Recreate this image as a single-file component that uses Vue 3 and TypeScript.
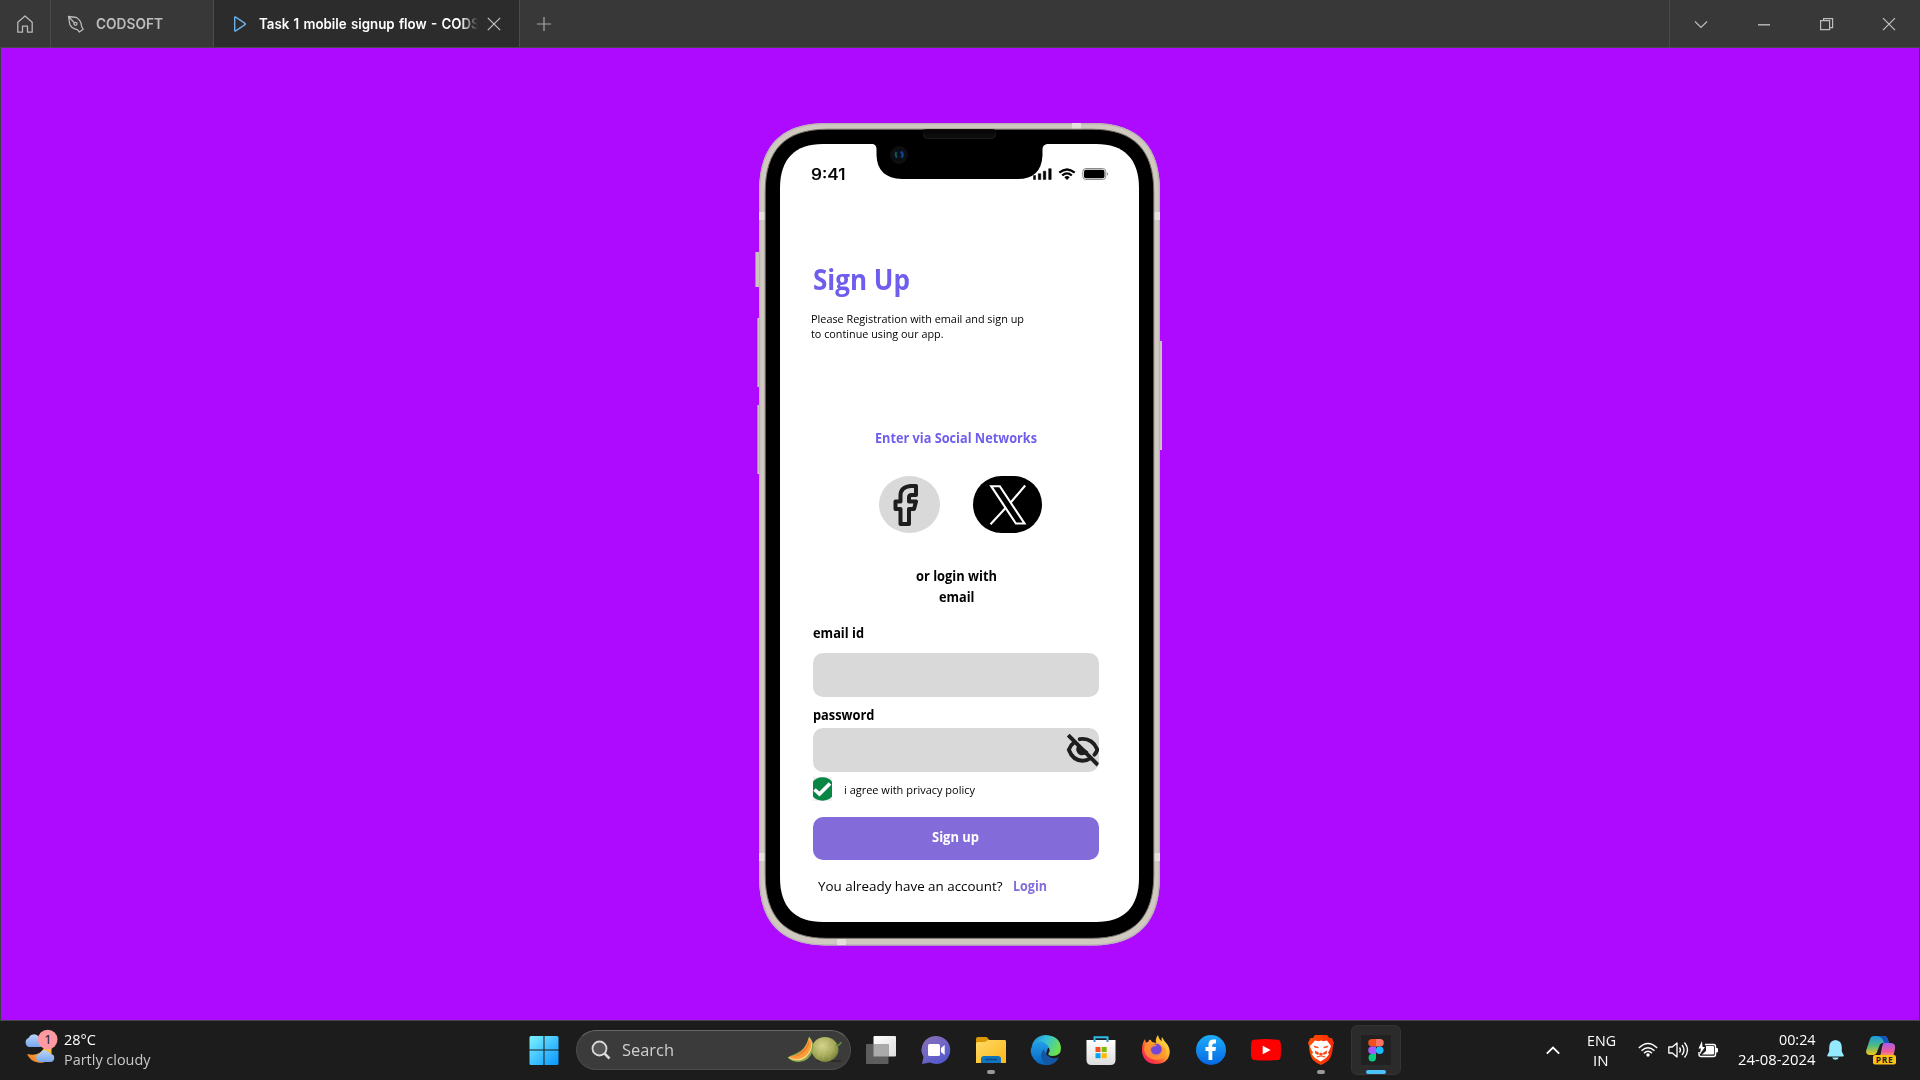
<script setup lang="ts">
import type { Directive } from 'vue'

// Condenses a run of text horizontally so that it occupies the given width.
const vFit: Directive<HTMLElement, number> = {
  mounted(el, { value }) {
    const natural = el.getBoundingClientRect().width
    if (!natural) return
    el.style.transform = `scaleX(${value / natural})`
    el.style.marginRight = `${value - natural}px`
  },
}
</script>

<template>
  <div class="desktop">
    <header class="titlebar">
      <div class="home">
        <svg width="18" height="20" viewBox="0 0 18 20" fill="none" stroke="#b9b9b9" stroke-width="1.3" stroke-linejoin="round"><path d="M1.8 8.2 9 2l7.2 6.200v10h-4.700v-6h-5v6H1.800z" /></svg>
      </div>
      <div class="tab tab-file">
        <svg width="18" height="20" viewBox="0 0 18 20" fill="none" stroke="#b9b9b9" stroke-width="1.3" stroke-linejoin="round"><path d="M1.500 2.500 9.500 3.500Q14.500 7 14.500 12.200L16.200 15.200 12.400 18 10.400 15.600Q4.500 14.500 2.800 10.200zM1.800 2.800 7.500 9" /><circle cx="8.500" cy="9.800" r="1.500" /></svg>
        <span v-fit="67" class="fit">CODSOFT</span>
      </div>
      <div class="tab tab-active">
        <svg width="14" height="18" viewBox="0 0 14 18" fill="none" stroke="#68b0ea" stroke-width="1.400" stroke-linejoin="round"><path d="M1.700 2.500v13q0 1 1 .400l9.300-6.200q.800-.700 0-1.400L2.700 2.100q-1-.600-1 .400z" /></svg>
        <div class="tab-title"><span v-fit="212" class="fit">Task 1 mobile signup flow - COD</span>S</div>
        <svg class="tab-x" width="14" height="14" viewBox="0 0 14 14" stroke="#c4c4c4" stroke-width="1.200"><path d="M.800.800l12.400 12.400M13.200.800.800 13.200" /></svg>
      </div>
      <svg class="plus" width="14" height="14" viewBox="0 0 14 14" stroke="#a5a5a5" stroke-width="1.200"><path d="M7 0v14M0 7h14" /></svg>
      <div class="controls">
        <svg width="62" height="48" viewBox="0 0 62 48" fill="none" stroke="#bdbdbd" stroke-width="1.200"><path d="M25 21.500l6 6 6-6" /></svg>
        <svg width="63" height="48" viewBox="0 0 63 48" fill="none" stroke="#bdbdbd" stroke-width="1.400"><path d="M26 24.800h12" /></svg>
        <svg width="62" height="48" viewBox="0 0 62 48" fill="none" stroke="#bdbdbd" stroke-width="1.200"><path d="M25.600 20.600h9v9h-9zM28.600 20.600v-2h9v9h-3" /></svg>
        <svg width="63" height="48" viewBox="0 0 63 48" fill="none" stroke="#c4c4c4" stroke-width="1.200"><path d="M26 18.200l12 12M38 18.200l-12 12" /></svg>
      </div>
    </header>

    <main class="stage">
      <div class="phone">
        <svg class="device" width="404" height="823" viewBox="0 0 404 823">
          <path d="M0 129h5v35H0zM2 195h4v69H2zM2 282h4v69H2z" fill="#cbc4bd" /><path d="M0 129h1v35H0zM2 195h1v69H2zM2 282h1v69H2z" fill="#9f91a5" />
          <path d="M403 218h4v109h-4z" fill="#cbc4bd" />
          <path d="M4 68C4 24 25 0 71 0H338C384 0 405 24 405 68V754C405 798 384 822.500 338 822.500H71C25 822.500 4 798 4 754z" fill="#d0c9c0" />
          <path d="M4.700 68C4.700 24 25 .700 71 .700H338C384 .700 404.300 24 404.300 68V754C404.300 798 384 821.800 338 821.800H71C25 821.800 4.700 798 4.700 754z" fill="none" stroke="#b9b0b4" stroke-width="1.200" />
          <path d="M4 89h7v8H4zM398 89h7v8h-7zM4 730h7v8H4zM398 730h7v8h-7zM317 0h9v6h-9zM82 816h9v6h-9z" fill="#e4dfda" />
          <path d="M10.200 69C10.200 27 30 6.200 72 6.200H337C379 6.200 398.800 27 398.800 69V752C398.800 794 379 815.300 337 815.300H72C30 815.300 10.200 794 10.200 752z" fill="#000" stroke="#77716b" stroke-width="1" />
          <path d="M25 65C25 36 40 21 68 21H341C369 21 384 36 384 65V755C384 784 369 799 341 799H68C40 799 25 784 25 755z" fill="#fff" />
          <rect x="168.500" y="6.500" width="72" height="9" rx="4" fill="#0c0c0c" stroke="#1d1d1d" />
          <path d="M168 6.500h72v4h-72z" fill="#080808" />
        </svg>
        <div class="screen">
          <div class="status">
            <span v-fit="34.500" class="fit clock">9:41</span>
            <svg class="signals" width="78" height="16" viewBox="0 0 78 16">
              <path d="M1.500 9.500h2v4h-2zM6.300 7.700h2.500v5.800H6.300zM11.300 5.200h2.500v8.300h-2.500zM16.700 2.700h2.500v10.800h-2.500z" stroke="#000" stroke-width=".500" stroke-linejoin="round" />
              <path d="M27.300 6.700Q35 .300 42.700 6.700M30.200 9.500Q35 5.200 39.800 9.500" fill="none" stroke="#000" stroke-width="2.300" /><path d="M32.300 11.200Q35 9 37.700 11.200L35 14z" />
              <rect x="50.800" y="2.500" width="23" height="11" rx="3.200" fill="none" stroke="#888" /><rect x="52" y="3.800" width="20.500" height="8.500" rx="2" /><path d="M75 6.300q2.200 1.600 0 3.400z" fill="#888" />
            </svg>
          </div>
          <h1><span v-fit="97" class="fit">Sign Up</span></h1>
          <p class="intro"><span v-fit="213" class="fit">Please Registration with email and sign up</span><br><span v-fit="132.500" class="fit">to continue using our app.</span></p>
          <p class="social-title"><span v-fit="162" class="fit">Enter via Social Networks</span></p>
          <div class="social">
            <button class="facebook" aria-label="Facebook">
              <svg width="27" height="44" viewBox="0 0 27 44" fill="none" stroke="#1e1e1e" stroke-width="4" stroke-linejoin="round"><path d="M24 3h-5.500Q8.500 4 8.500 12.500v6H3.500V26h5v15h8.500V26h5l2-7.500h-7v-4q0-2.500 2.500-2.500H24z" /></svg>
            </button>
            <button class="xlogo" aria-label="X">
              <svg width="38" height="40" viewBox="0 0 38 40" fill="none" stroke="#fff" stroke-width="2.100"><path d="M2.200 1.200h8.600L35.500 38.500h-8.600z" /><path d="M1.500 39.200 17 22.500M21.500 17.700 36.200.500" /></svg>
            </button>
          </div>
          <p class="or"><span v-fit="81" class="fit">or login with</span><br><span v-fit="35.500" class="fit">email</span></p>
          <label class="label email-label"><span v-fit="51" class="fit">email id</span></label>
          <div class="field"></div>
          <label class="label pass-label"><span v-fit="61.500" class="fit">password</span></label>
          <div class="field pass">
            <svg width="32" height="32" viewBox="0 0 32 32" fill="none" stroke="#1e1e1e" stroke-width="4"><path d="M1.200 1.200 31 31" /><path d="M12.700 5.200C22 3.500 28 9.500 30.300 15.500 29.800 17.500 28.800 19.300 27.500 20.600M7.200 8.200Q3.500 11 1.800 15.800C4.500 23 9.500 26.700 15.500 26.700Q20 26.700 23 24.500" stroke-linecap="round" stroke-width="3.900" /><path d="M11.800 12C8.500 15 11 20.300 15.500 20.300Q18.500 20.200 20 18z" fill="#1e1e1e" stroke-width="2" /></svg>
          </div>
          <div class="agree">
            <svg width="19" height="24" viewBox="0 0 19 24"><path d="M0 0h19v24H0z" fill="#f1eff0" /><path d="M0 4.500Q3 .500 9.500.300 16 .500 19 4.500v15Q16 23.500 9.500 23.700 3 23.500 0 19.500z" fill="#078644" /><path d="M1.500 12.500 6.500 17 17 6.500" fill="none" stroke="#fff" stroke-width="3.600" /></svg>
            <span v-fit="131" class="fit">i agree with privacy policy</span>
          </div>
          <button class="submit"><span v-fit="47" class="fit">Sign up</span></button>
          <p class="footer"><span v-fit="184.500" class="fit">You already have an account?</span><a><span v-fit="34" class="fit">Login</span></a></p>
        </div>
        <div class="notch">
          <svg width="182" height="50" viewBox="0 0 182 50"><path d="M4 15h174q-4.500 1-4.500 5v6q-1 24-25 24H33Q8 49 7.500 26v-6Q7.500 16 4 15z" /><circle cx="30" cy="26" r="9" fill="#0d0e10" /><circle cx="30" cy="25.500" r="5" fill="#07101d" /><path d="M27.500 23q-2 3 .500 5.500" stroke="#1d504f" stroke-width="2" fill="none" /><path d="M32 22.500q3 3 .500 6" stroke="#144090" stroke-width="2.500" fill="none" /></svg>
        </div>
      </div>
    </main>

    <footer class="taskbar">
      <div class="weather">
        <svg width="36" height="40" viewBox="0 0 36 40">
          <defs><linearGradient id="cl" x1="0" y1="0" x2="0" y2="1"><stop stop-color="#b9d4fb" /><stop offset="1" stop-color="#77a7ee" /></linearGradient><linearGradient id="mo" x1="1" y1="0" x2="0" y2="1"><stop stop-color="#ffd044" /><stop offset="1" stop-color="#ee7521" /></linearGradient></defs>
          <path d="M5 19a4.800 4.800 0 0 1-.500-9A6 6 0 0 1 15 9q5 1 5 5t-4 5z" fill="url(#cl)" />
          <path d="M27.500 18v12Q21 36 14 34.500 6 33 3 26q12 3 17-6z" fill="url(#mo)" />
          <path d="M16 34a4.300 4.300 0 0 1 0-8.500Q18 21.500 22 22.500q3 .500 4 3.500 4.500 0 4.200 4.200-.200 3.800-4.200 3.800z" fill="url(#cl)" />
          <circle cx="23.700" cy="11.500" r="9.800" fill="#ff9aa3" /><text x="24" y="16.200" text-anchor="middle" font-family="Noto Sans, sans-serif" font-size="13" fill="#222">1</text>
        </svg>
        <div class="weather-text"><div><span v-fit="32" class="fit">28°C</span></div><div class="dim"><span v-fit="86.500" class="fit">Partly cloudy</span></div></div>
      </div>

      <div class="cell start">
        <svg width="30" height="30" viewBox="0 0 30 30"><defs><linearGradient id="win" x1="0" y1="0" x2="1" y2="1"><stop stop-color="#7cf3ff" /><stop offset="1" stop-color="#0794ff" /></linearGradient></defs><path d="M2 1h12.500v13.500H.500v-12Q.500 1 2 1zM15.500 1H28q1.500 0 1.500 1.500v12h-14zM.500 15.500h14V30H2Q.500 30 .500 28.500zM15.500 15.500h14v13q0 1.500-1.500 1.500H15.500z" fill="url(#win)" /></svg>
      </div>
      <div class="search">
        <svg width="20" height="20" viewBox="0 0 20 20" fill="none" stroke="#d9d9d9" stroke-width="1.800"><circle cx="8.500" cy="8.500" r="7" fill="#555" /><path d="M13.500 13.500 18.500 18.500" stroke-width="2.500" /></svg>
        <span v-fit="52" class="fit">Search</span>
        <svg class="melon" width="56" height="28" viewBox="0 0 56 28">
          <defs><radialGradient id="ml" cx=".4" cy=".35" r=".7"><stop stop-color="#d5d58e" /><stop offset=".6" stop-color="#a7aa59" /><stop offset="1" stop-color="#717a36" /></radialGradient></defs>
          <path d="M30 25h24" stroke="#302c27" stroke-width="2" />
          <ellipse cx="38" cy="13.500" rx="13.500" ry="12.500" fill="url(#ml)" /><path d="M28 9l6 5-3 8M33 3l5 8-2 13M42 2l-3 9 5 5-2 9M48 6l-4 6 5 5" stroke="#d9d59d" stroke-width=".500" fill="none" stroke-dasharray="1.500 1.500" opacity=".7" /><path d="M49 9q4 1 5-3" stroke="#63893d" stroke-width="1.800" fill="none" />
          <path d="M22 .500Q28 7 26 14 23 25 12 26 5 26 .500 21.500 4 19 8 18 19 14 22 .500z" fill="#83a84c" /><path d="M22.200 1.200Q26.500 7 24.500 13.500 20 24 11 24.500 5 24.500 1.200 21.300 19 19 22.200 1.200z" fill="#fbd27c" /><path d="M22.200 1.500Q25.500 8 23 13.500 19 22 11 23 5 23.500 2 21 18 18 22.200 1.500z" fill="#fb9b3d" /><path d="M22 4Q23 10 18 15 13 20 6 21 19 16 22 4z" fill="#f17d27" />
        </svg>
      </div>
      <div class="cell view">
        <svg width="30" height="30" viewBox="0 0 30 30"><defs><linearGradient id="tv" x2="1" y2="1"><stop stop-color="#fff" /><stop offset="1" stop-color="#ddd" /></linearGradient></defs><rect x="7.500" y="1" width="22.500" height="20.500" rx="1" fill="url(#tv)" /><rect x="0" y="9" width="22.500" height="20" rx="1" fill="#5d5d5d" /><path d="M7.500 9h15v12.500h-15z" fill="#aaa" /></svg>
      </div>
      <div class="cell">
        <svg width="30" height="30" viewBox="0 0 30 30"><defs><linearGradient id="ch" x2=".7" y2="1"><stop stop-color="#8a70b3" /><stop offset=".55" stop-color="#6e66c6" /><stop offset="1" stop-color="#5058cb" /></linearGradient></defs><path d="M15.500 1A14 14 0 1 1 9 27.500L1 29 2.500 22A14 14 0 0 1 15.500 1z" fill="url(#ch)" /><rect x="7" y="9" width="12" height="12" rx="1.500" fill="#fff" /><path d="M20 13l3.700-3v10L20 17z" fill="#fff" /></svg>
      </div>
      <div class="cell">
        <svg width="30" height="30" viewBox="0 0 30 30"><defs><linearGradient id="fo" x2="1" y2="1"><stop stop-color="#ffd968" /><stop offset="1" stop-color="#fbb917" /></linearGradient></defs><path d="M0 10V4q0-2 2-2h8.500l3 3-3 5z" fill="#db9805" /><path d="M0 8.500Q0 7 2 7h7l3-2h17q1 0 1 1.500V28H0z" fill="url(#fo)" /><path d="M5 28v-4q0-3 3-3h14q3 0 3 3v4z" fill="#1273bd" /><path d="M9 24.500h12" stroke="#084d88" stroke-width="1.500" /></svg>
        <i class="running"></i>
      </div>
      <div class="cell">
        <svg width="30" height="30" viewBox="0 0 30 30"><defs><linearGradient id="ed1" x1="0" x2="1" y2=".4"><stop stop-color="#168bd3" /><stop offset=".5" stop-color="#35c1db" /><stop offset="1" stop-color="#6be052" /></linearGradient><linearGradient id="ed2" x2="0" y2="1"><stop stop-color="#239fe8" /><stop offset="1" stop-color="#0864be" /></linearGradient></defs><path d="M.500 12Q3 .500 15 0 29 1 30 13q0 8-8.500 8-5 0-4-3 2-2 .500-5L10 9Q3 8 .500 12z" fill="url(#ed1)" /><path d="M18 12Q12 4 4 8-2 13 .500 20q4 10 15 10 4 0 6-1-9-4-6-12 1-4 2.500-5z" fill="url(#ed2)" /><path d="M13 14q-7 8 2 15.500Q25 30 28 22q-6 3-11-1-3-2-4-7z" fill="#1557a5" /></svg>
      </div>
      <div class="cell">
        <svg width="30" height="30" viewBox="0 0 30 30"><defs><linearGradient id="st" x2="0" y2="1"><stop stop-color="#fff" /><stop offset="1" stop-color="#ddd" /></linearGradient></defs><path d="M8.500 6V2.200H21.500V6" fill="none" stroke="#2dbce9" stroke-width="2" /><path d="M.500 5h29v20q0 5-5 5h-19q-5 0-5-5z" fill="url(#st)" /><path d="M8.500 5h1v2h-2V5zM21.500 5h1v2h-2V5z" fill="#2798cf" /><path d="M9.500 12h5v5h-5z" fill="#f25022" /><path d="M15.700 12h5v5h-5z" fill="#7fba00" /><path d="M9.500 18.200h5v5h-5z" fill="#00a4ef" /><path d="M15.700 18.200h5v5h-5z" fill="#ffb900" /></svg>
      </div>
      <div class="cell">
        <svg width="30" height="30" viewBox="0 0 30 30"><defs><linearGradient id="ff" x1="1" y1="0" x2="0" y2="1"><stop stop-color="#fff44f" /><stop offset=".4" stop-color="#ffb02d" /><stop offset=".7" stop-color="#ff403b" /><stop offset="1" stop-color="#e7157f" /></linearGradient></defs><path d="M17 0q1 5 4 6-1-2 0-4 2 4 5 7 3 4 2.700 9Q27 29 15 29T1 17Q.500 9 4 4l1 4 2-1q2-5 4 0l4 1Q14 4 17 0z" fill="url(#ff)" /><circle cx="15" cy="15" r="6.500" fill="#7547d7" /><path d="M4 8q7-3 10 1l2 2q-5 0-6 3 0 7 8 5 5-4 1-9 7 3 6 8-2 7-10 7Q4 23 3 15z" fill="#ff9a2e" opacity=".8" /></svg>
      </div>
      <div class="cell">
        <svg width="30" height="30" viewBox="0 0 30 30"><defs><linearGradient id="fb" x2="0" y2="1"><stop stop-color="#1cadfa" /><stop offset="1" stop-color="#0568e4" /></linearGradient></defs><circle cx="15" cy="15" r="15" fill="url(#fb)" /><path d="M12.500 25v-9H9.500v-4h3V9.500q0-5 5-5h2.500v4h-2q-1.700 0-1.700 1.700V12H20l-.600 4h-3.100v9z" fill="#fff" /></svg>
      </div>
      <div class="cell">
        <svg width="30" height="30" viewBox="0 0 30 30"><path d="M3 4.700Q15 3.500 27 4.700q2.500.300 2.700 3 .600 7 0 14-.200 3-2.700 3.300-12 1-24 0Q.600 24.700.300 22q-.600-7 0-14Q.500 5 3 4.700z" fill="#f00" /><path d="M11.700 10.700v8.500l8-4.200z" fill="#fff" /></svg>
      </div>
      <div class="cell">
        <svg width="30" height="30" viewBox="0 0 30 30"><defs><linearGradient id="br" x2="1"><stop stop-color="#ff5200" /><stop offset="1" stop-color="#fa2708" /></linearGradient></defs><path d="M9 0h12L23.500 3h2.500L28 8l-1 3q-.500 9-4 14-3.500 3-8 5Q10 28 7 25 3.500 20 3 11L2 8 4.500 3H7z" fill="url(#br)" /><path d="M9 5.500l3.500.700 2.500-.700 2.500.700 3.500-.700 4 5.500-1 3-2 3.500 1 2-3 3.500-5.500 3.500-5.500-3.500-3-3.500 1-2-2-3.500-1-3z" fill="#fff" /><path d="M7.500 10.500 12.800 12l-.800 1.300-3.500-.800zM22.500 10.500 17.200 12l.800 1.300 3.500-.800zM9 15.500l4 2.200-.800 2.200-3-1.500zM21 15.500l-4 2.200.800 2.200 3-1.500zM15 17.500l2.500 1.500L15 20.500 12.500 19zM10.500 21.500 15 20.200l4.500 1.300-.500 1-4-1-4 1z" fill="#fb4a16" /></svg>
        <i class="running"></i>
      </div>
      <div class="cell">
        <div class="tile"><svg width="30" height="30" viewBox="0 0 30 30"><path d="M0 0h30v30H0z" fill="#212121" /><path d="M15 4h-4a3.600 3.600 0 0 0 0 7.500h4z" fill="#f24e1e" /><path d="M15 4h4a3.600 3.600 0 0 1 0 7.500h-4z" fill="#ff7262" /><path d="M15 11.500h-4a3.600 3.600 0 0 0 0 7.500h4z" fill="#a259ff" /><circle cx="18.700" cy="15.200" r="3.800" fill="#1abcfe" /><path d="M15 19h-4a3.700 3.700 0 1 0 4 3.700z" fill="#0acf83" /></svg></div>
        <i class="running active"></i>
      </div>

      <div class="tray">
        <svg class="up" width="14" height="9" viewBox="0 0 14 9" fill="none" stroke="#fff" stroke-width="1.800"><path d="M.800 7.700 7 1.500l6.200 6.200" /></svg>
        <div class="lang"><div><span v-fit="29" class="fit">ENG</span></div><div><span v-fit="15.500" class="fit">IN</span></div></div>
        <svg class="wifi" width="20" height="16" viewBox="0 0 20 16" fill="none" stroke="#fff" stroke-width="1.400"><path d="M.800 6Q10-3 19.200 6M3.500 8.800q6.500-6.200 13 0M6 11.300q4-4 8 0" /><circle cx="10" cy="13" r="1.700" fill="#fff" stroke="none" /></svg>
        <svg class="sound" width="20" height="18" viewBox="0 0 20 18" fill="none" stroke="#fff" stroke-width="1.300"><path d="M.800 6h3.500L9 2v14l-4.700-4H.800z" stroke-linejoin="round" /><path d="M11.500 6.500q2 2.500 0 5M14 4q4 5 0 10M16.500 1.500q6 7.500 0 15" /></svg>
        <svg class="battery" width="20" height="18" viewBox="0 0 20 18"><path d="M7 3.500h8.500q2 0 2 2v8q0 2-2 2H3q-2 0-2-2V11" fill="none" stroke="#fff" stroke-width="1.400" /><path d="M8 5h7q1 0 1 1v6.500q0 1-1 1H4L8 10zM18 7h1q1 0 1 1v2.500q0 1-1 1h-1z" fill="#fff" /><path d="M4 0 .500 7.500H3L1.500 14 7 6H4.500z" fill="#fff" /></svg>
        <div class="date"><div><span v-fit="36.500" class="fit">00:24</span></div><div><span v-fit="77.500" class="fit">24-08-2024</span></div></div>
        <svg class="bell" width="17" height="20" viewBox="0 0 17 20" fill="#93eaff"><path d="M8.500 0Q14.500.500 14.800 7v4.500l2 4q.200 1-1 1H1.200q-1.200 0-1-1l2-4V7Q2.500.500 8.500 0zM5.200 17.500h6.600q-.800 2.200-3.300 2.200t-3.300-2.200z" /></svg>
        <svg class="copilot" width="30" height="30" viewBox="0 0 30 30"><defs><linearGradient id="c1" x2="0" y2="1"><stop stop-color="#1c9be0" /><stop offset=".5" stop-color="#4dba82" /><stop offset="1" stop-color="#f4c817" /></linearGradient><linearGradient id="c2" x2="0" y2="1"><stop stop-color="#a65de8" /><stop offset=".6" stop-color="#ee5c98" /><stop offset="1" stop-color="#ffa35a" /></linearGradient></defs><path d="M8 1h10q3 0 4 4l1 3h-6q-3 0-4 4l-2 5q-1 3-4 3H4q-4 0-4-4L4 4q1-3 4-3z" fill="url(#c1)" /><path d="M11 1h7q3 0 4 4l1 3h-5q-1-6-7-7z" fill="#1654bf" /><path d="M18 8h7q5 0 4 6l-2 8H12q3-1 3-5l1-5q1-4 2-4z" fill="url(#c2)" /><rect x="7" y="20" width="23" height="9.500" rx="2" fill="#fdc313" /><text x="18.500" y="27.600" text-anchor="middle" font-family="Open Sans, sans-serif" font-size="8.500" font-weight="700" letter-spacing=".6" fill="#222">PRE</text></svg>
      </div>
    </footer>
  </div>
</template>

<style>
body { margin: 0; overflow: hidden; }
</style>

<style scoped>
.desktop { width: 1920px; height: 1080px; display: flex; flex-direction: column; background: #1c1c1c; font-family: "Open Sans", "Noto Sans", sans-serif; }
.desktop svg { display: block; flex: none; overflow: visible; }
.fit { display: inline-block; white-space: nowrap; transform-origin: 0 50%; }
p, h1 { margin: 0; }
button { border: 0; padding: 0; font: inherit; }

.titlebar { height: 48px; box-sizing: border-box; border-bottom: 1px solid #4a4a4a; background: #383838; display: flex; align-items: center; font-family: Inter, sans-serif; font-size: 14px; line-height: 20px; }
.home { width: 50px; height: 47px; border-right: 1px solid #4b4b4b; display: flex; align-items: center; justify-content: center; }
.tab { height: 47px; box-sizing: border-box; border-right: 1px solid #4b4b4b; display: flex; align-items: center; }
.tab-file { width: 163px; padding-left: 16px; gap: 11px; color: #bdbdbd; font-weight: 600; }
.tab-active { width: 306px; padding-left: 19px; background: #2c2c2c; color: #fff; font-weight: 600; }
.tab-title { width: 219px; margin-left: 12px; white-space: nowrap; word-spacing: 1px; mask-image: linear-gradient(90deg, #000 202px, transparent 219px); }
.tab-x { margin-left: 9px; }
.plus { margin-left: 17px; }
.controls { margin-left: auto; height: 47px; border-left: 1px solid #4b4b4b; display: flex; width: 250px; }

.stage { height: 972px; box-sizing: border-box; padding-top: 75px; background: #ad0aff; border: solid #3d3d45; border-width: 0 1px; display: flex; justify-content: center; }
.phone { position: relative; width: 404px; height: 823px; margin-right: 6px; }
.device { position: absolute; left: 0; top: 0; }
.notch { position: absolute; left: 113.500px; top: 6px; }
.screen { position: relative; margin: 21px 0 0 25px; width: 359px; height: 778px; box-sizing: border-box; padding: 20px 40px 0 33px; display: flex; flex-direction: column; color: #000; }
.status { display: flex; height: 20px; margin-left: -2.500px; align-items: center; }
.clock { font: 500 15.400px/20px Inter, sans-serif; padding-top: 1px; -webkit-text-stroke: .2px #000; }
.signals { margin: 0 0 0 186.500px; }
h1 { margin-top: 78px; font-size: 28px; line-height: 34px; font-weight: 700; color: #6f5eed; }
.intro { margin: 16px 0 0 -2.500px; font-size: 11.300px; line-height: 14.500px; }
.social-title { margin: 87px 0 0 61.500px; font-size: 13.500px; line-height: 20px; font-weight: 700; color: #6f5eed; }
.social { display: flex; margin: 28px 0 0 66px; gap: 33px; height: 57px; }
.facebook, .xlogo { display: flex; align-items: flex-start; box-sizing: border-box; height: 57px; }
.facebook { width: 61px; border-radius: 50%; background: #d9d9d9; padding: 7px 0 0 12.500px; }
.xlogo { width: 68.500px; border-radius: 29px; background: #000; padding: 9px 0 0 15.500px; }
.or { width: 81px; margin: 33px 0 0 103px; text-align: center; font-size: 13.500px; line-height: 21px; font-weight: 700; white-space: nowrap; }
.label { font-size: 13.500px; line-height: 20px; font-weight: 700; }
.email-label { margin-top: 15px; }
.field { height: 44px; margin-top: 10px; background: #d9d9d9; border-radius: 10px; flex: none; }
.pass-label { margin-top: 8px; }
.pass { margin-top: 3px; display: flex; justify-content: flex-end; align-items: center; overflow: hidden; }
.agree { display: flex; margin-top: 5px; height: 24px; font-size: 11.300px; line-height: 25px; gap: 12px; }
.submit { height: 43px; margin-top: 16px; border-radius: 10px; background: #836cd9; color: #fff; font-size: 13.500px; line-height: 41px; font-weight: 700; text-align: left; padding: 0 0 2px 119px; }
.footer { margin: 16px 0 0 5px; font-size: 13.500px; line-height: 20px; white-space: nowrap; display: flex; gap: 10.500px; }
.footer a { color: #836cd9; font-weight: 700; }

.taskbar { height: 60px; box-sizing: border-box; border-top: 1px solid #474747; background: #1c1c1c; display: flex; align-items: center; color: #fff; font-size: 15px; line-height: 20px; padding-bottom: 1px; }
.weather { width: 491.500px; box-sizing: border-box; margin-right: 25px; padding-left: 24px; display: flex; align-items: center; flex: none; margin-top: -4px; }
.weather-text { margin: 1px 0 0 4px; }
.dim { color: #c9c9c9; }
.cell { width: 55px; height: 59px; flex: none; display: flex; align-items: center; justify-content: center; position: relative; }
.search { width: 275px; height: 40px; box-sizing: border-box; border: 1px solid #4c4c4c; border-top-color: #686868; border-radius: 20px; background: #3b3b3b; margin-left: 4.500px; padding-left: 14px; display: flex; align-items: center; font-size: 17px; color: #cfcfcf; flex: none; }
.search .fit { margin-left: 11px; }
.search .melon { margin-left: auto; margin-right: 7px; }
.view { margin-left: 2.500px; }
.running { position: absolute; left: 23.500px; bottom: 6px; width: 8px; height: 4px; border-radius: 2px; background: #999; }
.running.active { left: 17.500px; width: 20px; background: #4cc2ff; }
.tile { width: 50px; height: 50px; box-sizing: border-box; border: 1px solid #343434; border-radius: 6px; background: #2b2b2b; display: flex; align-items: center; justify-content: center; }
.tray { display: flex; align-items: center; margin-left: 142.500px; }
.lang { margin-left: 26.500px; width: 29px; text-align: center; white-space: nowrap; margin-top: -1px; }
.wifi { margin-left: 22.500px; }
.sound { margin-left: 10px; }
.battery { margin-left: 10px; }
.date { width: 78px; margin-left: 19.500px; text-align: right; margin-top: -2px; white-space: nowrap; }
.bell { margin-left: 11px; }
.copilot { margin-left: 22px; }
</style>
